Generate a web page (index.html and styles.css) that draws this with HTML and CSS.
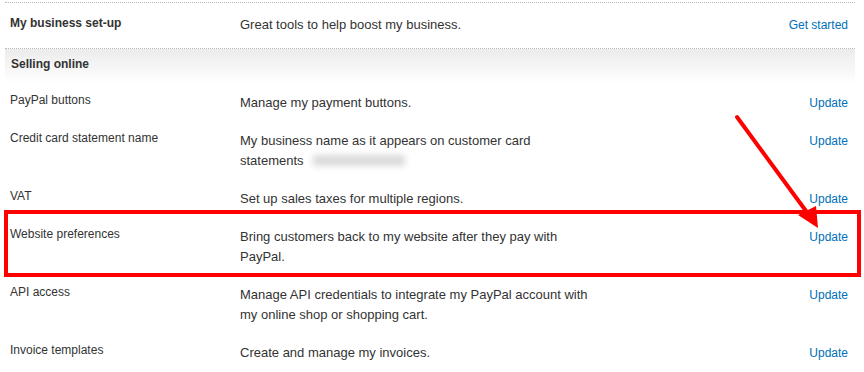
FILE: index.html
```html
<!DOCTYPE html>
<html lang="en">
<head>
    <meta charset="UTF-8">
    <meta name="viewport" content="width=device-width, initial-scale=1.0">
    <title>Seller preferences</title>
    <link rel="stylesheet" href="styles.css">
</head>
<body>
    <div class="settings">
        <div class="row row-top">
            <div class="label label-strong">My business set-up</div>
            <div class="desc">Great tools to help boost my business.</div>
            <a class="action" href="#">Get started</a>
        </div>

        <div class="section-head">Selling online</div>

        <div class="row">
            <div class="label">PayPal buttons</div>
            <div class="desc">Manage my payment buttons.</div>
            <a class="action" href="#">Update</a>
        </div>
        <div class="row">
            <div class="label">Credit card statement name</div>
            <div class="desc">My business name as it appears on customer card statements <span class="redacted"></span></div>
            <a class="action" href="#">Update</a>
        </div>
        <div class="row">
            <div class="label">VAT</div>
            <div class="desc">Set up sales taxes for multiple regions.</div>
            <a class="action" href="#">Update</a>
        </div>
        <div class="row">
            <div class="label">Website preferences</div>
            <div class="desc">Bring customers back to my website after they pay with PayPal.</div>
            <a class="action" href="#">Update</a>
        </div>
        <div class="row">
            <div class="label">API access</div>
            <div class="desc">Manage API credentials to integrate my PayPal account with my online shop or shopping cart.</div>
            <a class="action" href="#">Update</a>
        </div>
        <div class="row">
            <div class="label">Invoice templates</div>
            <div class="desc">Create and manage my invoices.</div>
            <a class="action" href="#">Update</a>
        </div>
    </div>

    <!-- annotation drawn over the page -->
    <div class="callout"></div>
    <svg class="arrow" width="864" height="372" viewBox="0 0 864 372">
        <line x1="737" y1="117" x2="806" y2="211" stroke="#ff0000" stroke-width="4" stroke-linecap="round"></line>
        <polygon points="818,228 798,215 816,206" fill="#ff0000"></polygon>
    </svg>
</body>
</html>
```

FILE: styles.css
```css
:root {
    --text-dark: #333333;
    --link-blue: #0070ba;
    --rule-gray: #b8b8b8;
    --head-gray: #ececec;
    --callout-red: #ff0000;
}

* {
    box-sizing: border-box;
}

body {
    margin: 0;
    position: relative;
    background: #fff;
    color: var(--text-dark);
    font-family: "Liberation Sans", Arial, sans-serif;
}

.settings {
    width: 850px;
    margin: 2px 0 0 5px;
}

.row {
    display: flex;
    padding: 9px 7px 9px 5px;
}

.row-top {
    padding: 12px 7px 13px 5px;
    border-top: 1px dotted var(--rule-gray);
    border-bottom: 1px dotted var(--rule-gray);
}

.label {
    flex-shrink: 0;
    width: 230px;
    font-size: 12px;
    line-height: 14px;
}

.label-strong {
    padding-top: 1px;
    font-weight: bold;
}

.desc {
    flex-shrink: 0;
    width: 355px;
    font-size: 13px;
    line-height: 20px;
}

.action {
    margin-left: auto;
    color: var(--link-blue);
    font-size: 12px;
    line-height: 20px;
    text-decoration: none;
}

.section-head {
    padding: 8px 6px 13px;
    background: linear-gradient(to bottom, var(--head-gray), #fff);
    font-size: 12px;
    font-weight: bold;
    line-height: 14px;
}

.redacted {
    display: inline-block;
    width: 92px;
    height: 11px;
    margin-left: 6px;
    vertical-align: -1px;
    background: #dadada;
    filter: blur(3px);
}

.callout {
    position: absolute;
    left: 4px;
    top: 210px;
    width: 857px;
    height: 67px;
    border: 4px solid var(--callout-red);
    pointer-events: none;
}

.arrow {
    position: absolute;
    left: 0;
    top: 0;
    pointer-events: none;
}
```
